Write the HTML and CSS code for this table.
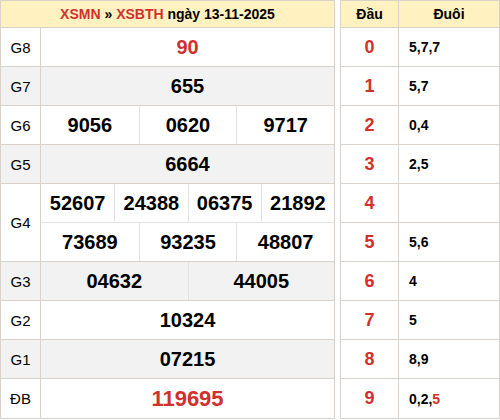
FILE: index.html
```html
<!DOCTYPE html>
<html>
<head>
<meta charset="utf-8">
<link rel="stylesheet" href="styles.css">
</head>
<body>
<div class="wrap">
  <table class="kq">
    <tr class="head"><th colspan="2"><span class="red">XSMN</span> » <span class="red">XSBTH</span> ngày 13-11-2025</th></tr>
    <tr><td class="lbl">G8</td><td class="nums"><div class="row c1"><div class="n red">90</div></div></td></tr>
    <tr class="alt"><td class="lbl">G7</td><td class="nums"><div class="row c1"><div class="n">655</div></div></td></tr>
    <tr><td class="lbl">G6</td><td class="nums"><div class="row c3"><div class="n">9056</div><div class="n">0620</div><div class="n">9717</div></div></td></tr>
    <tr class="alt"><td class="lbl">G5</td><td class="nums"><div class="row c1"><div class="n">6664</div></div></td></tr>
    <tr class="dbl"><td class="lbl">G4</td><td class="nums">
      <div class="row c4"><div class="n">52607</div><div class="n">24388</div><div class="n">06375</div><div class="n">21892</div></div>
      <div class="row c3 sep"><div class="n">73689</div><div class="n">93235</div><div class="n">48807</div></div>
    </td></tr>
    <tr class="alt"><td class="lbl">G3</td><td class="nums"><div class="row c2"><div class="n">04632</div><div class="n">44005</div></div></td></tr>
    <tr><td class="lbl">G2</td><td class="nums"><div class="row c1"><div class="n">10324</div></div></td></tr>
    <tr class="alt"><td class="lbl">G1</td><td class="nums"><div class="row c1"><div class="n">07215</div></div></td></tr>
    <tr class="last"><td class="lbl">ĐB</td><td class="nums"><div class="row c1"><div class="n red big">119695</div></div></td></tr>
  </table>
  <table class="lt">
    <tr class="head"><th class="dau">Đầu</th><th>Đuôi</th></tr>
    <tr><td class="d">0</td><td class="t">5,7,7</td></tr>
    <tr><td class="d">1</td><td class="t">5,7</td></tr>
    <tr><td class="d">2</td><td class="t">0,4</td></tr>
    <tr><td class="d">3</td><td class="t">2,5</td></tr>
    <tr><td class="d">4</td><td class="t"></td></tr>
    <tr><td class="d">5</td><td class="t">5,6</td></tr>
    <tr><td class="d">6</td><td class="t">4</td></tr>
    <tr><td class="d">7</td><td class="t">5</td></tr>
    <tr><td class="d">8</td><td class="t">8,9</td></tr>
    <tr class="last"><td class="d">9</td><td class="t">0,2,<span class="red">5</span></td></tr>
  </table>
</div>
</body>
</html>
```
FILE: styles.css
```css
html, body { margin: 0; padding: 0; background: #fff; }
body { font-family: "Liberation Sans", Arial, sans-serif; color: #000; }
.wrap { display: flex; gap: 5px; align-items: flex-start; }
table { border-collapse: collapse; }
td, th { border: 1px solid #d9d2ca; padding: 0; }
.red { color: #d0312d; }
.kq { width: 335px; }
.lt { width: 160px; }
.head th { background: #fff2c0; height: 26px; font-size: 14px; font-weight: bold; text-align: center; }
.kq tr td { height: 38px; }
.kq tr.dbl td { height: 77px; }
.kq tr.last td, .lt tr.last td { height: 39px; }
.alt td { background: #f2f2f2; }
.lbl { width: 39px; text-align: center; font-size: 15px; }
.nums { vertical-align: middle; }
.row { display: grid; height: 38px; }
.c1 { grid-template-columns: 1fr; }
.c2 { grid-template-columns: 1fr 1fr; }
.c3 { grid-template-columns: 1fr 1fr 1fr; }
.c4 { grid-template-columns: 1fr 1fr 1fr 1fr; }
.sep { border-top: 1px solid #e2e2e2; }
.n { display: flex; align-items: center; justify-content: center; font-size: 20px; font-weight: bold; }
.n + .n { border-left: 1px solid #e2e2e2; }
.big { font-size: 22px; }
.lt td { height: 38px; }
.dau { width: 57px; }
.d { text-align: center; font-size: 18px; font-weight: bold; color: #d0312d; }
.t { padding-left: 10px; font-size: 14px; font-weight: bold; }
```
